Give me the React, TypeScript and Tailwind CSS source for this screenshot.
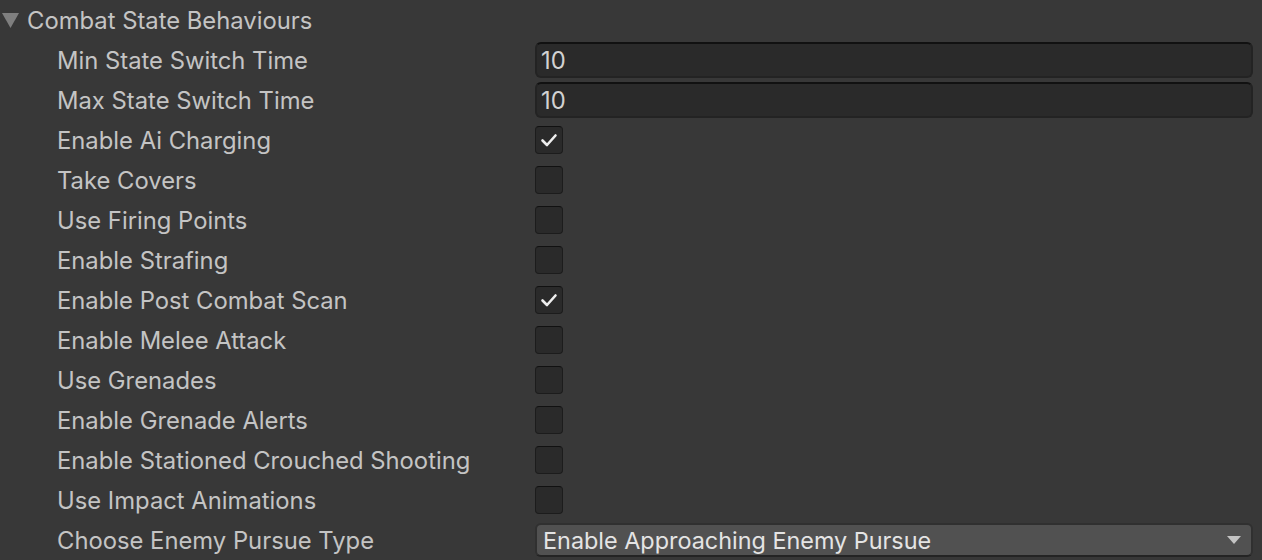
import React from "react";

type Row =
  | { label: string; kind: "number"; value: string }
  | { label: string; kind: "check"; value: boolean }
  | { label: string; kind: "enum"; value: string };

const rows: Row[] = [
  { label: "Min State Switch Time", kind: "number", value: "10" },
  { label: "Max State Switch Time", kind: "number", value: "10" },
  { label: "Enable Ai Charging", kind: "check", value: true },
  { label: "Take Covers", kind: "check", value: false },
  { label: "Use Firing Points", kind: "check", value: false },
  { label: "Enable Strafing", kind: "check", value: false },
  { label: "Enable Post Combat Scan", kind: "check", value: true },
  { label: "Enable Melee Attack", kind: "check", value: false },
  { label: "Use Grenades", kind: "check", value: false },
  { label: "Enable Grenade Alerts", kind: "check", value: false },
  { label: "Enable Stationed Crouched Shooting", kind: "check", value: false },
  { label: "Use Impact Animations", kind: "check", value: false },
  { label: "Choose Enemy Pursue Type", kind: "enum", value: "Enable Approaching Enemy Pursue" },
];

function Check({ on }: { on: boolean }) {
  return (
    <div className="w-[28px] h-[28px] rounded-[4px] bg-[#2a2a2a] border border-[#1c1c1c] border-t-[#111111] flex items-center justify-center">
      {on && (
        <svg width="20" height="20" viewBox="0 0 20 20">
          <path d="M3.5 10.5 L8 15 L16.5 5.5" fill="none" stroke="#eeeeee" strokeWidth="2.6" strokeLinecap="round" strokeLinejoin="round" />
        </svg>
      )}
    </div>
  );
}

export default function App() {
  return (
    <div
      className="w-[1262px] h-[560px] bg-[#383838] text-[#c4c4c4] text-[23.8px] overflow-hidden"
      style={{ fontFamily: "Inter, 'Noto Sans', sans-serif" }}
    >
      <div className="h-[40px] flex items-center">
        <div className="w-[27px] flex items-center pl-[2px]">
          <svg width="17" height="15" viewBox="0 0 17 15">
            <polygon points="0,0 17,0 8.5,15" fill="#7f7f7f" />
          </svg>
        </div>
        <span className="leading-none pt-[2px]">Combat State Behaviours</span>
      </div>
      {rows.map((r, i) => (
        <div key={i} className="h-[40px] flex items-center">
          <div className="w-[535px] shrink-0 pl-[57px] leading-none pt-[2px]">{r.label}</div>
          <div className="flex-1 pr-[9px] flex items-center">
            {r.kind === "number" && (
              <div className="w-full h-[36px] rounded-[6px] bg-[#2a2a2a] border-2 border-[#232323] border-t-[#111111] flex items-center pl-[4px] pt-[1px] text-[#d2d2d2]">
                {r.value}
              </div>
            )}
            {r.kind === "check" && <Check on={r.value} />}
            {r.kind === "enum" && (
              <div className="w-full h-[34px] rounded-[6px] bg-[#515151] border-2 border-[#303030] border-b-[#242424] flex items-center justify-between pl-[6px] pr-[10px] text-[#e4e4e4] text-[23.4px]">
                <span className="pt-[1px]">{r.value}</span>
                <svg width="14" height="8" viewBox="0 0 14 8">
                  <polygon points="0,0 14,0 7,8" fill="#c4c4c4" />
                </svg>
              </div>
            )}
          </div>
        </div>
      ))}
    </div>
  );
}
